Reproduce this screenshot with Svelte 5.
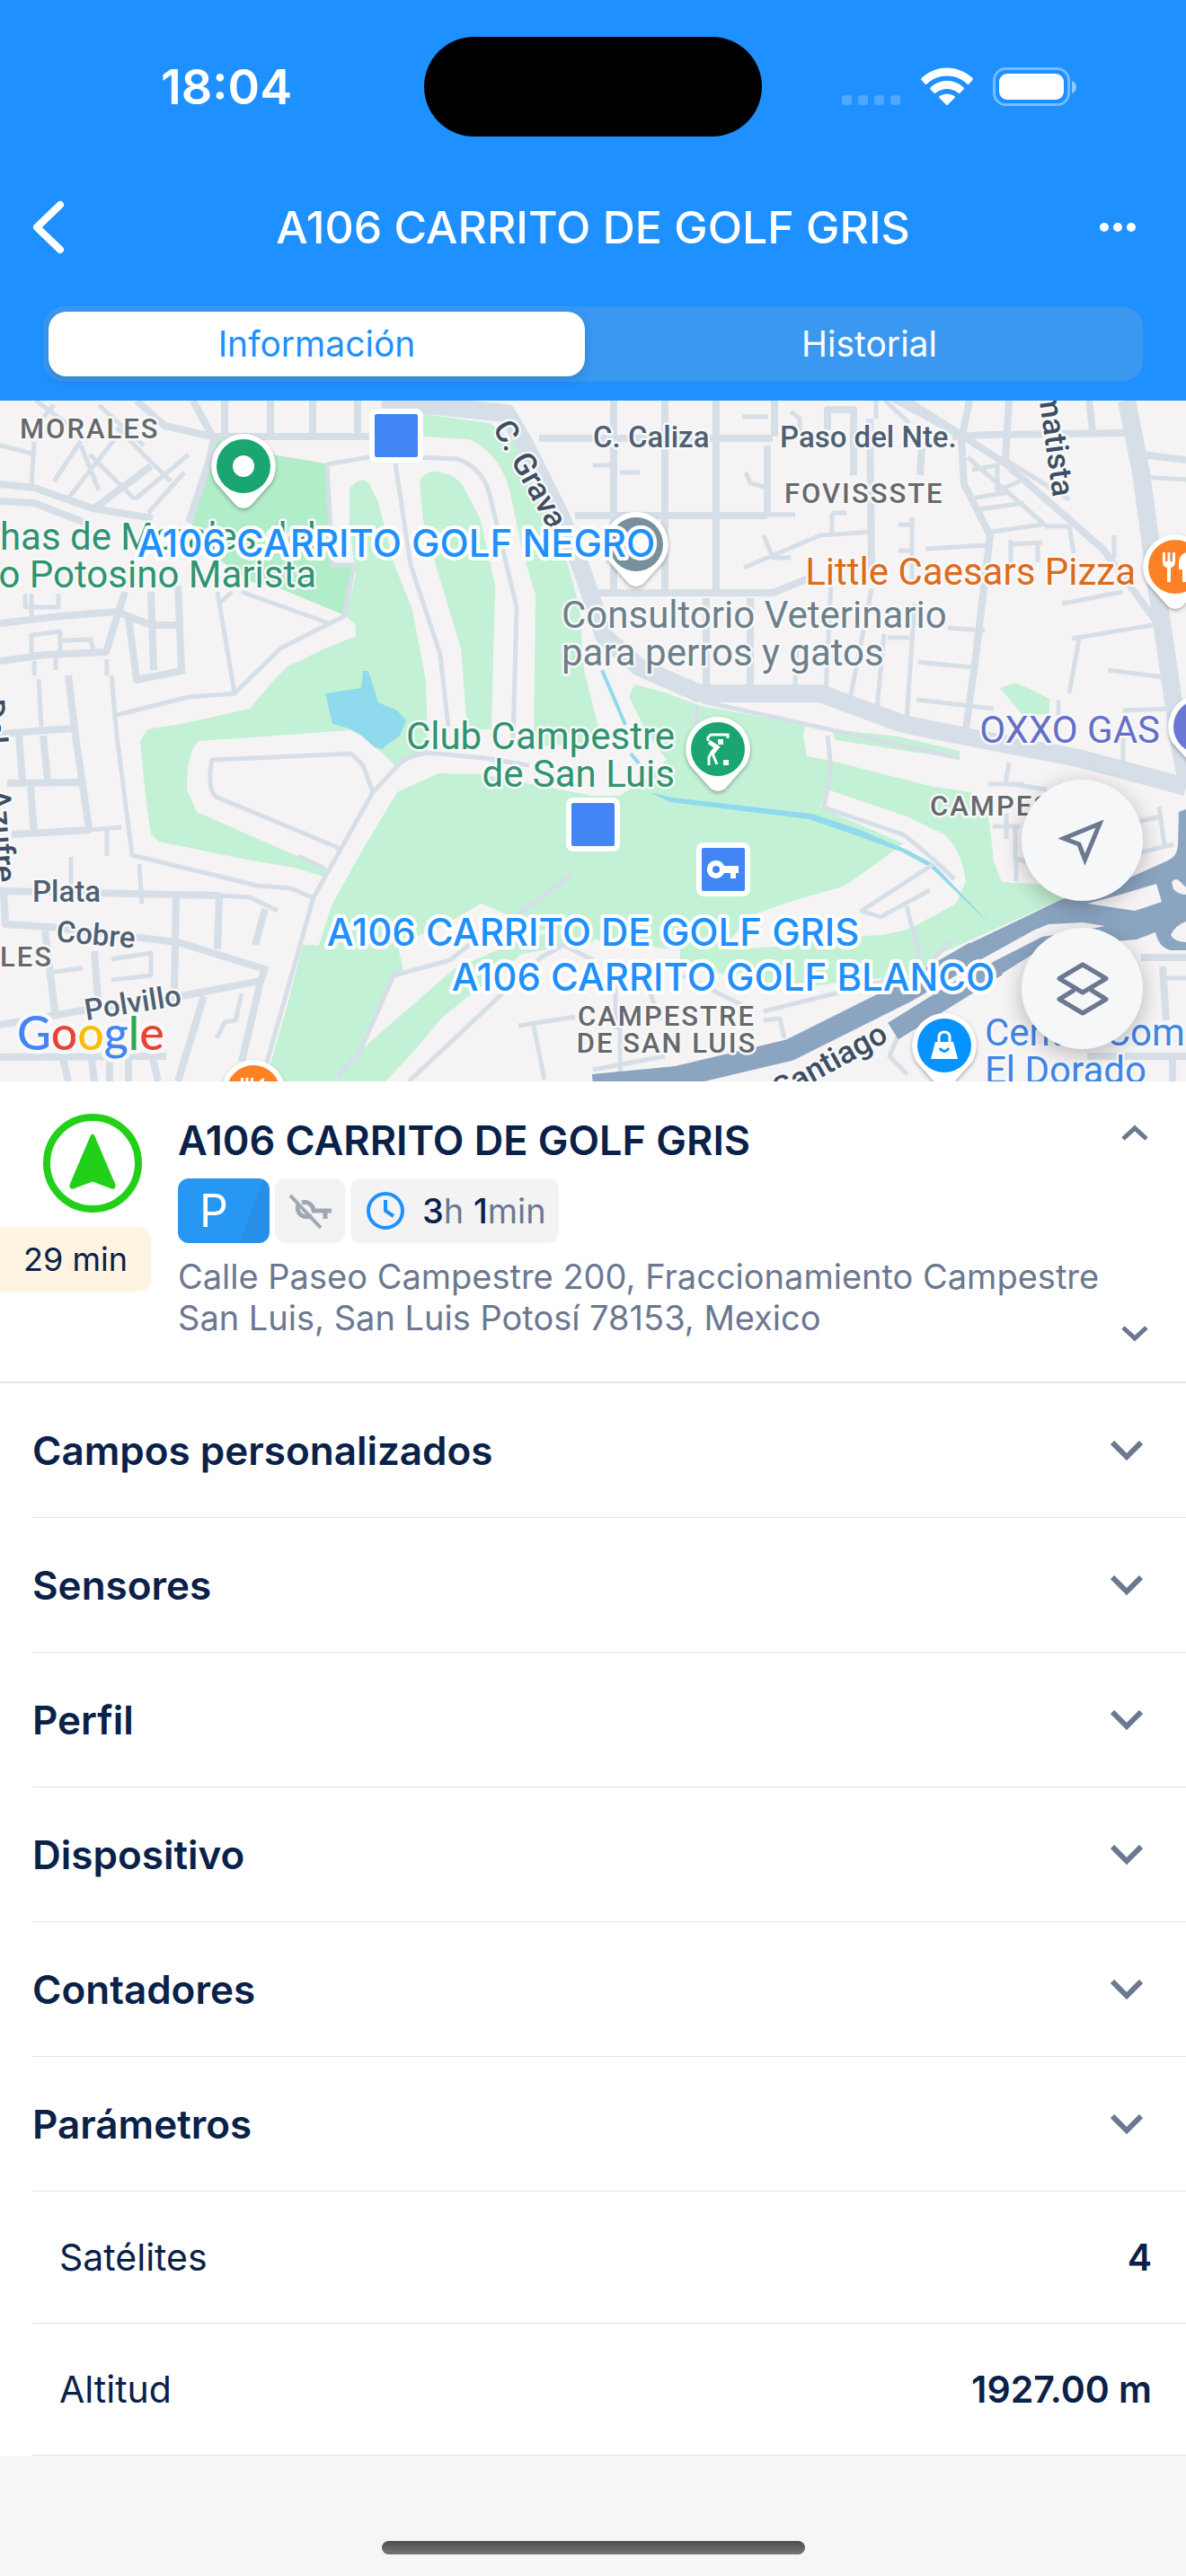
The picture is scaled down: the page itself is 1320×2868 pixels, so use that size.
<script>
  const vehicle = "A106 CARRITO DE GOLF GRIS"

  let tab = $state("info")
  const tabs = [
    { id: "info", label: "Información" },
    { id: "history", label: "Historial" },
  ]

  const sections = [
    "Campos personalizados",
    "Sensores",
    "Perfil",
    "Dispositivo",
    "Contadores",
    "Parámetros",
  ]

  const params = [
    { name: "Satélites", value: "4" },
    { name: "Altitud", value: "1927.00 m" },
  ]

  // Map geometry, in the 1320x758 space of the map's viewBox
  const parks = [
    "M415 8L480 16L545 25L572 46L592 90L620 140L645 230L650 300L670 380L594 385L596 216L581 166L568 103Q558 60 522 43L471 40L430 30Z",
    "M389 98Q400 84 410 91L421 113L438 180L459 233L474 313L476 390L455 396L440 408L434 400L405 375L390 367L221 379Q208 390 208 433L219 458L328 506L364 520L360 530L328 520L269 510L177 491L168 483L162 440L156 380L164 366L202 360L278 343L303 313L320 296L362 276L396 262V250L385 240L396 193L394 180L389 140Z",
    "M467 90Q470 80 484 79Q508 82 516 96L535 133L551 206L547 366H520L513 276L484 180L471 133Z",
    "M706 316L740 325L780 340L836 350L896 362L894 373L898 396L921 400L1039 430L1081 436L1100 460L1106 513L1115 536L1178 540L1186 553L1035 621L1022 640L955 645L883 655L820 640L780 635L757 622L757 600L660 592L600 590L561 571L535 560L497 583L450 602L444 610L353 612L370 560L400 506L442 436L488 415L535 416L623 433L660 440L690 440L720 420L742 400L720 370L700 330Z",
    "M337 606L444 610L450 633L434 643L413 693L398 726L371 758H295L318 680Z",
    "M404 721L505 633L589 596L660 586L757 600L760 622L660 603L581 616L493 686L460 725L429 758H371Z",
    "M925 366L1000 374L1068 390V399L930 378Z",
    "M1113 320L1130 314L1148 322L1168 332V348L1140 352L1128 338Z",
  ]

  const clearings = [
    "M921 433L1009 463L1051 483Q1070 500 1075 535L1064 560L1022 583Q988 600 929 595L887 606L824 611L807 606L837 573L879 558L938 541Q950 535 1005 493L913 453Z",
    "M444 612L497 583L535 560L561 571L589 586L560 600L520 622L450 640Z",
    "M660 600L757 612L757 640L660 640Z",
  ]

  const bigRoads = [
    "M425 0L564 14L585 50L623 126L650 195L672 262L710 296L778 326H913L1005 360L1085 376L1200 398L1320 430",
    "M1254 0L1270 80L1287 206L1313 383L1320 420",
  ]

  const roads = [
    "M0 93L38 97L103 120L170 131",
    "M0 112L38 114L100 138",
    "M210 136L232 70L238 43L215 0",
    "M152 0L183 28L236 40H420",
    "M250 0V40M301 0V40M348 0V40M398 0V40",
    "M105 120L168 73",
    "M0 248L67 240L130 235L168 250H198",
    "M0 290L50 283L118 280L139 213",
    "M143 240L152 311L206 300",
    "M168 213L171 300M198 206L202 300",
    "M76 306L84 373L99 476",
    "M21 373L25 423M48 373L53 423M8 426L93 425M34 430L38 480M13 483L101 478",
    "M0 371L80 365",
    "M0 546L244 551M196 551L194 660M244 551L242 611M295 566L284 606",
    "M4 546L6 583L55 586L198 603L295 633L290 646L202 663L97 678L0 695",
    "M290 646L269 736M227 663L198 758M105 613L109 666M50 590L61 680",
    "M0 731L185 730M70 732L76 758M102 732L105 758M122 732V758M143 732V758M170 732L176 758",
    "M683 0V213M740 0V213M797 0V213M854 50V127M862 0V40",
    "M600 42H860M1060 40L1100 38L1254 36",
    "M640 128H854M660 214H860L900 198",
    "M921 33V10H950V83M968 20L970 190M1026 53L1024 83",
    "M1010 0L1119 70L1228 166L1290 250",
    "M980 -10L1072 40",
    "M1079 0L1070 43L1073 93L1102 150L1085 293L1075 366",
    "M1212 0L1216 33M1123 0L1119 66",
    "M1270 60L1320 66",
    "M786 220V320M835 220V320",
    "M1270 620H1320",
    "M1294 630L1298 690M1210 730H1320M1305 730V758",
  ]

  const lanes = [
    "M38 46L35 93",
    "M242 213L261 326L312 276L383 240L394 183H370L364 71L421 61L509 65Q540 75 547 113L575 230L571 376",
    "M261 326L210 330L130 350",
    "M269 213L366 248",
    "M245 225L258 213",
    "M440 70L457 183L490 283L499 363",
    "M124 306L130 373L147 506L286 540L324 543L347 553",
    "M291 758L349 553L415 436L446 403Q465 390 488 393L539 398L589 406",
    "M415 436L404 406L391 393L236 400Q230 430 240 441L377 498",
    "M332 507L360 520",
    "M375 753L400 726L438 640L501 623L526 603L580 570L636 528",
    "M455 758L602 620L627 606L660 623",
    "M577 696L640 686M594 696L606 756",
    "M43 310L46 363M62 300V285M38 306V290M119 306V288",
    "M35 261L67 257V282L35 283ZM70 267L101 266L104 277",
    "M244 551L278 553L309 568",
    "M124 622L168 615V640L124 645M60 636L92 632",
    "M135 475L101 478M119 477V507M155 516L158 560M79 508V560",
    "M269 660L262 690L250 692L241 710M262 690L265 683",
    "M921 373L925 410L917 453L1005 483Q1040 510 1062 533",
    "M1039 516L959 568L980 575L1035 545",
    "M1009 563L1024 620",
    "M775 340V380M782 335L1068 398",
    "M1123 403L1119 426L1165 433M1100 427H1140",
    "M1105 474H1135M1120 460V488M1130 474V510L1150 515M1131 510V535M1262 470L1292 463M1290 452L1296 495M1262 505L1306 494",
    "M887 270L885 320M925 203L919 326M970 210L946 333M984 260L976 343M1018 226L1009 356",
    "M1022 291L1081 297M1020 333L1106 343M1182 226L1249 213M1193 265L1283 250M1201 265L1190 326M1233 300L1296 308M1055 253L1096 256M988 264H1018",
    "M1250 345L1300 343M1178 333V350",
    "M1030 165L1098 161M828 186L913 150L972 146M850 150L860 175L880 175",
    "M1077 63L1165 140L1190 140M1119 66L1190 110M1104 146L1160 138M1125 155V180M1155 160V180M1125 160L1160 158",
    "M854 127H885M926 125H942M926 125V150M1015 130V200M1000 138H1018M1000 167H1015",
    "M826 18H855M880 12L890 20V40M975 0V20M985 0L1012 25",
    "M1082 77L1110 72V100L1135 90M1085 108L1125 102M1090 121L1140 114",
    "M830 80L835 92L855 97",
    "M660 72H680M690 80H712",
    "M1272 85L1320 88M1240 150V175M1190 140L1195 170",
    "M685 650V700M720 650L735 690M760 640L830 675M850 680L1010 640M850 690L868 688L873 710M690 690V758M660 745L740 730",
    "M1000 706L990 730L1010 750M1020 640L1060 600",
    "M1250 373V405M1294 643H1320",
    "M60 90L90 45M75 110L130 40M90 50L110 100M100 60L150 110M130 30L190 90M150 110L210 60M165 125L205 80M110 5L160 50M60 5L30 40M0 50L40 60M40 0L80 30",
    "M28 215V230H65V215M35 240V215",
  ]

  const interchangeHoles = [
    "M1070 634L1103 616L1150 590L1167 583L1205 581L1230 585L1205 590L1160 597L1105 625L1070 646Z",
    "M1210 560L1247 550L1287 538L1293 558L1263 568Z",
    "M1304 536Q1309 530 1314 536L1320 542V550Q1312 550 1306 544Z",
    "M1303 595Q1308 584 1320 580V603Q1306 602 1303 595Z",
  ]

  const pins = [
    { x: 271, y: 73, color: "#1aa571", icon: "dot" },
    { x: 708, y: 160, color: "#78909c", icon: "dot" },
    { x: 1308, y: 185, color: "#ff8126", icon: "food" },
    { x: 799, y: 388, color: "#1aa571", icon: "golf" },
    { x: 1336, y: 363, color: "#6b78d3", icon: "" },
    { x: 1051, y: 718, color: "#0793ff", icon: "shop" },
    { x: 282, y: 770, color: "#ff8126", icon: "food" },
  ]

  const markers = [
    { x: 441, y: 39, labelY: 174, name: "A106 CARRITO GOLF NEGRO", key: false },
    { x: 660, y: 472, labelY: 607, name: vehicle, key: false },
    { x: 805, y: 522, labelY: 657, name: "A106 CARRITO GOLF BLANCO", key: true },
  ]
</script>

<div class="app">
  <header>
    <div class="status">
      <time>18:04</time>
      <div class="island"></div>
      <svg width="262" height="44" viewBox="0 0 262 44" fill="#fff" aria-hidden="true">
        <g fill-opacity="0.22">
          <rect x="0" y="31" width="11" height="11" rx="3" />
          <rect x="18" y="31" width="11" height="11" rx="3" />
          <rect x="36" y="31" width="11" height="11" rx="3" />
          <rect x="54" y="31" width="11" height="11" rx="3" />
        </g>
        <path d="M117 0.500C128 0.500 138 5 145.500 12Q146.500 13 145.500 14L141.500 18.500Q140.500 19.500 139.500 18.500C133 12.500 125.500 9.500 117 9.500S101 12.500 94.500 18.500Q93.500 19.500 92.500 18.500L88.500 14Q87.500 13 88.500 12C96 5 106 0.500 117 0.500Z" />
        <path d="M117 15C124 15 130.500 17.500 135.500 22.500Q136.500 23.500 135.500 24.500L131.500 28.500Q130.500 29.500 129.500 28.500C126 25.500 121.500 24 117 24S108 25.500 104.500 28.500Q103.500 29.500 102.500 28.500L98.500 24.500Q97.500 23.500 98.500 22.500C103.500 17.500 110 15 117 15Z" />
        <path d="M117 29.500Q122 29.500 125.500 32Q126.500 33 125.500 34L118 41.500Q117 42.500 116 41.500L108.500 34Q107.500 33 108.500 32Q112 29.500 117 29.500Z" />
        <rect x="169.500" y="1.500" width="83" height="40" rx="13" fill="none" stroke="#fff" stroke-opacity="0.4" stroke-width="3" />
        <rect x="175" y="7" width="72" height="29" rx="9" />
        <path d="M256 15Q261 17 261 22T256 29Z" fill-opacity="0.5" />
      </svg>
    </div>

    <nav>
      <button class="icon-btn" aria-label="Atrás">
        <svg width="35" height="60" viewBox="0 0 35 60" fill="none" stroke="#fff" stroke-width="8" stroke-linecap="round" stroke-linejoin="round">
          <path d="M31 5L5 30L31 55" />
        </svg>
      </button>
      <h1>{vehicle}</h1>
      <button class="icon-btn more" aria-label="Más">
        <svg width="40" height="10" viewBox="0 0 40 10" fill="#fff">
          <circle cx="5" cy="5" r="5" />
          <circle cx="20" cy="5" r="5" />
          <circle cx="35" cy="5" r="5" />
        </svg>
      </button>
    </nav>

    <div class="tabs" role="tablist">
      {#each tabs as t}
        <button
          role="tab"
          aria-selected={tab === t.id}
          class:active={tab === t.id}
          onclick={() => (tab = t.id)}>{t.label}</button
        >
      {/each}
    </div>
  </header>

  <section class="map">
    <svg class="canvas" viewBox="0 0 1320 758" preserveAspectRatio="xMidYMid slice" role="img" aria-label="Mapa">
      <rect width="1320" height="758" fill="#f5f3f4" />

      {#each parks as d}
        <path {d} fill="#c3f1d5" />
      {/each}
      <path d="M242 43L309 61L362 70L366 133L370 183L394 185L381 238L316 211L274 200L210 150L229 86Z" fill="#b0edc8" />
      {#each clearings as d}
        <path {d} fill="#f5f3f4" />
      {/each}

      <path d="M362 326L402 320L404 301H410L421 336L442 345L452 356L445 373L425 388L417 386L400 371L388 365L370 360Z" fill="#90daee" />
      <path d="M723 436L748 442L904 460L955 477L1009 500L1039 516L1102 583L1036 520L1005 503L950 483L900 466L746 447Z" fill="#90daee" />
      <path d="M670 300L696 361M702 393L711 404" fill="none" stroke="#90daee" stroke-width="4" />

      <g class="roads">
        {#each lanes as d}
          <path {d} stroke-width="5" />
        {/each}
        {#each roads as d}
          <path {d} stroke-width="8" />
        {/each}
        {#each bigRoads as d}
          <path {d} stroke-width="20" />
        {/each}
        <path class="highway" d="M660 762L753 753L879 723L1009 658L1085 614" stroke-width="24" />
        <path class="highway" d="M994 702L1110 630" stroke-width="22" />
      </g>
      <path
        d="M1078 605L1147 572L1180 556L1240 535L1260 530L1300 512Q1310 508 1311 495L1312 458L1320 455V612H1304Q1290 610 1286 592L1265 600L1240 602L1200 602L1150 616L1107 643L1078 650Z"
        fill="#8ba5c1"
      />
      {#each interchangeHoles as d}
        <path {d} fill="#f5f3f4" />
      {/each}

      {#each pins as pin}
        <g transform="translate({pin.x} {pin.y})">
          <path class="drop" d="M0 -36A36 36 0 0 1 31 18L8 44Q0 50 -8 44L-31 18A36 36 0 0 1 0 -36Z" />
          <circle r="30" fill={pin.color} />
          {#if pin.icon === "dot"}
            <circle r="12" fill="#fff" />
          {:else if pin.icon === "food"}
            <path d="M-14 -16V-6Q-14 0 -9 1V17H-5V1Q0 0 0 -6V-16H-3V-6H-5.500V-16H-8.500V-6H-11V-16ZM12 -16Q3 -13 4 -2V3H8V17H12Z" fill="#fff" />
          {:else if pin.icon === "golf"}
            <g fill="none" stroke="#fff" stroke-width="3">
              <path d="M-11 -9V-13L-8 -16H11V-12" />
              <path d="M-10 -8L-1 -2L-7 5" stroke-width="5" />
              <path d="M-7 4L-10 9V18M-6 5L-1 17" />
            </g>
            <rect x="0" y="-11" width="6" height="6" fill="#fff" />
            <rect x="6" y="12" width="6" height="6" fill="#fff" />
          {:else if pin.icon === "shop"}
            <path d="M-10 -4H10L15 15H-15Z" fill="#fff" />
            <path d="M-6 -4V-9Q-6 -15 0 -15T6 -9V-4" fill="none" stroke="#fff" stroke-width="3" />
            <path d="M-5 3Q0 10 5 3" fill="none" stroke={pin.color} stroke-width="3" />
          {/if}
        </g>
      {/each}

      <g class="area">
        <text x="22" y="42">MORALES</text>
        <text x="873" y="114">FOVISSSTE</text>
        <text x="1035" y="462">CAMPESTRE</text>
        <text x="0" y="630">LES</text>
        <text x="742" y="696" text-anchor="middle">CAMPESTRE</text>
        <text x="742" y="726" text-anchor="middle">DE SAN LUIS</text>
      </g>

      <g class="street">
        <text x="660" y="52">C. Caliza</text>
        <text x="868" y="52">Paso del Nte.</text>
        <text x="36" y="558">Plata</text>
        <text transform="translate(62 602) rotate(5)">Cobre</text>
        <text transform="translate(96 690) rotate(-9)">Polvillo</text>
        <text class="dark" transform="translate(548 30) rotate(61)">C. Grava</text>
        <text class="dark" transform="translate(1172 108) rotate(82)" text-anchor="end">Amatista</text>
        <text class="dark" transform="translate(-20 333) rotate(86)">Del</text>
        <text class="dark" transform="translate(-6 537) rotate(86)" text-anchor="end">Azufre</text>
        <text class="dark" transform="translate(990 712) rotate(-29)" text-anchor="end">Santiago</text>
      </g>

      <g class="place">
        <g class="green">
          <text x="352" y="166" text-anchor="end">has de Morales del</text>
          <text x="352" y="208" text-anchor="end">o Potosino Marista</text>
          <text x="751" y="388" text-anchor="end">Club Campestre</text>
          <text x="751" y="430" text-anchor="end">de San Luis</text>
        </g>
        <g class="slate">
          <text x="625" y="253">Consultorio Veterinario</text>
          <text x="625" y="295">para perros y gatos</text>
        </g>
        <text x="1264" y="205" text-anchor="end" class="orange">Little Caesars Pizza</text>
        <text x="1291" y="381" text-anchor="end" class="violet">OXXO GAS</text>
        <g class="blue">
          <text x="1096" y="718">Centro Com</text>
          <text x="1096" y="760">El Dorado</text>
        </g>
      </g>

      {#each markers as m}
        <g transform="translate({m.x} {m.y})">
          <rect x="-30" y="-30" width="60" height="60" rx="8" fill="#fff" />
          <rect x="-24" y="-24" width="48" height="48" rx="2" fill="#4285f4" />
          {#if m.key}
            <path d="M-8 -10A10 10 0 1 0 1 4H8V10H14V4H17V-4H1A10 10 0 0 0 -8 -10ZM-8 -4A4 4 0 1 1 -8 4A4 4 0 1 1 -8 -4Z" fill="#fff" fill-rule="evenodd" />
          {/if}
        </g>
      {/each}
      {#each markers as m}
        <text class="vehicle" x={m.x} y={m.labelY} text-anchor="middle">{m.name}</text>
      {/each}

      <text class="google" x="19" y="723"
        ><tspan fill="#4285f4">G</tspan><tspan fill="#ea4335">o</tspan><tspan fill="#fbbc04">o</tspan><tspan
          fill="#4285f4">g</tspan
        ><tspan fill="#34a853">l</tspan><tspan fill="#ea4335">e</tspan></text
      >
    </svg>

    <div class="controls">
      <button aria-label="Centrar">
        <svg width="60" height="60" viewBox="0 0 60 60" fill="none" stroke="#6b7890" stroke-width="5">
          <path d="M49 11L9 27.500L26 34L32.500 51Z" />
        </svg>
      </button>
      <button aria-label="Capas">
        <svg width="60" height="60" viewBox="0 0 60 60" fill="none" stroke="#6b7890" stroke-width="5" stroke-linejoin="round">
          <path d="M30 3L56 18.500L30 34L4 18.500Z" />
          <path d="M21 31L4 41.500L30 57L56 41.500L39 31" />
        </svg>
      </button>
    </div>
  </section>

  <section class="summary">
    <div class="state">
      <svg width="110" height="110" viewBox="0 0 110 110" aria-hidden="true">
        <circle cx="55" cy="55" r="51" fill="none" stroke="#22d01a" stroke-width="8" />
        <path d="M52.500 25Q55 20 57.500 25L80.500 79Q81 84.500 76 83.500L55 75.500L34 83.500Q29 84.500 29.500 79Z" fill="#22d01a" />
      </svg>
      <span class="ago">29 min</span>
    </div>

    <div class="details">
      <h2>{vehicle}</h2>
      <div class="chips">
        <span class="chip parking">P</span>
        <span class="chip ignition">
          <svg width="48" height="48" viewBox="0 0 48 48" fill="none" stroke="#a0a7b4" stroke-width="5" aria-hidden="true">
            <path d="M11 17A10 10 0 0 0 26 29M15 15A10 10 0 0 1 28 24M26 24H48M41 24V33" />
            <path d="M2 7L36 43" stroke-width="4" />
          </svg>
        </span>
        <span class="chip duration">
          <svg width="42" height="42" viewBox="0 0 42 42" fill="none" stroke="#1e90ff" stroke-width="4" aria-hidden="true">
            <circle cx="21" cy="21" r="19" />
            <path d="M21 9V21L30 27" />
          </svg>
          <span><b>3</b>h <b>1</b>min</span>
        </span>
      </div>
      <p>Calle Paseo Campestre 200, Fraccionamiento Campestre San Luis, San Luis Potosí 78153, Mexico</p>
    </div>

    <div class="switcher">
      <button class="icon-btn" aria-label="Anterior">
        <svg width="30" height="18" viewBox="0 0 30 18" fill="none" stroke="#6b7890" stroke-width="5">
          <path d="M2 16L15 4L28 16" />
        </svg>
      </button>
      <button class="icon-btn" aria-label="Siguiente">
        <svg width="30" height="18" viewBox="0 0 30 18" fill="none" stroke="#6b7890" stroke-width="5">
          <path d="M2 2L15 14L28 2" />
        </svg>
      </button>
    </div>
  </section>

  <section class="list">
    {#each sections as title}
      <button class="row">
        {title}
        <svg width="36" height="22" viewBox="0 0 36 22" fill="none" stroke="#6b7890" stroke-width="6" aria-hidden="true">
          <path d="M2 2L18 18L34 2" />
        </svg>
      </button>
    {/each}
    <dl>
      {#each params as p}
        <div class="param">
          <dt>{p.name}</dt>
          <dd>{p.value}</dd>
        </div>
      {/each}
    </dl>
  </section>

  <footer><div class="home"></div></footer>
</div>

<style>
  :global(body) {
    background: #f5f6f8;
  }

  .app {
    display: flex;
    flex-direction: column;
    min-height: 100vh;
    font-family: Inter, "Noto Sans", sans-serif;
    color: #0a2149;
    background: #f5f6f8;
  }

  button {
    border: 0;
    background: none;
    font: inherit;
    color: inherit;
    cursor: pointer;
  }

  svg {
    display: block;
    flex: none;
  }

  header {
    padding: 41px 0 21px;
    background: #1e90ff;
    color: #fff;
  }

  .status {
    display: grid;
    grid-template-columns: 1fr auto 1fr;
    align-items: center;
    justify-items: center;
    padding: 0 32px;
  }

  .status time {
    font-size: 54px;
    line-height: 64px;
    font-weight: 600;
  }

  .island {
    width: 376px;
    height: 111px;
    border-radius: 56px;
    background: #000;
  }

  nav {
    display: grid;
    grid-template-columns: 1fr auto 1fr;
    align-items: center;
    padding: 61px 36px 48px;
  }

  .icon-btn {
    padding: 0;
    justify-self: start;
  }

  .more {
    justify-self: end;
    padding: 20px;
  }

  h1 {
    margin: 0;
    font-size: 50px;
    line-height: 80px;
    font-weight: 500;
  }

  .tabs {
    display: grid;
    grid-template-columns: 1fr 1fr;
    gap: 18px;
    margin: 0 48px;
    padding: 6px;
    border-radius: 24px;
    background: #3a98f0;
  }

  .tabs button {
    padding: 0;
    border-radius: 20px;
    font-size: 39px;
    line-height: 72px;
    color: #fff;
  }

  .tabs .active {
    background: #fff;
    color: #1e90ff;
    box-shadow: 0 4px 12px rgba(0, 0, 0, 0.14);
  }

  .map {
    position: relative;
    overflow: hidden;
  }

  .canvas {
    width: 100%;
    height: auto;
  }

  .roads path {
    fill: none;
    stroke: #d6dfe7;
    stroke-linejoin: round;
  }

  .roads .highway {
    stroke: #8ba5c1;
  }

  .drop {
    fill: #fff;
    filter: drop-shadow(0 2px 2px rgba(0, 0, 0, 0.3));
  }

  .canvas text {
    font-family: Roboto, "Noto Sans", sans-serif;
    stroke: #f8f8f8;
    stroke-width: 5px;
    stroke-linejoin: round;
    paint-order: stroke;
  }

  .canvas .area text {
    font-size: 31px;
    font-weight: 500;
    letter-spacing: 2px;
    fill: #66696c;
  }

  .canvas .street text {
    font-size: 33px;
    font-weight: 500;
    fill: #4f6073;
  }

  .canvas .street .dark {
    font-size: 35px;
    fill: #3d4e62;
  }

  .canvas .place text {
    font-size: 42px;
  }

  .green {
    fill: #2f9471;
  }

  .slate {
    fill: #6c808c;
  }

  .orange {
    fill: #dc6b1c;
  }

  .violet {
    fill: #6470c8;
  }

  .blue {
    fill: #3f86e6;
  }

  .canvas .vehicle {
    font-family: Inter, "Noto Sans", sans-serif;
    font-size: 42px;
    font-weight: 500;
    fill: #1e90ff;
    stroke: #fff;
    stroke-width: 8px;
  }

  .canvas .google {
    font-family: Lato, sans-serif;
    font-size: 52px;
    font-weight: 500;
    stroke-width: 9px;
  }

  .controls {
    position: absolute;
    right: 48px;
    bottom: 36px;
    display: flex;
    flex-direction: column;
    gap: 30px;
  }

  .controls button {
    display: grid;
    place-items: center;
    width: 135px;
    height: 135px;
    padding: 0;
    border-radius: 50%;
    background: #f5f7f9;
    box-shadow: 0 6px 24px rgba(0, 0, 0, 0.25);
  }

  .summary {
    display: grid;
    grid-template-columns: 168px 1fr auto;
    padding-right: 42px;
    border-bottom: 2px solid #e3e4e9;
    background: #fff;
  }

  .state {
    display: flex;
    flex-direction: column;
    gap: 16px;
    padding-top: 36px;
  }

  .state svg {
    margin-left: 48px;
  }

  .ago {
    padding-left: 26px;
    border-radius: 0 14px 14px 0;
    background: #fff3e2;
    font-size: 36px;
    line-height: 72px;
  }

  .details {
    display: flex;
    flex-direction: column;
    gap: 14px;
    padding: 38px 0 48px 30px;
  }

  h2 {
    margin: 0;
    font-size: 45px;
    line-height: 56px;
    font-weight: 600;
  }

  .chips {
    display: flex;
    gap: 6px;
  }

  .chip {
    display: flex;
    align-items: center;
    height: 72px;
    border-radius: 12px;
    background: #f3f3f4;
  }

  .parking {
    width: 102px;
    box-sizing: border-box;
    padding-left: 24px;
    background: linear-gradient(110deg, #2697f3 74%, #2690e8 74%);
    color: #fff;
    font-size: 50px;
  }

  .ignition {
    padding: 0 15px;
  }

  .duration {
    gap: 20px;
    padding: 0 14px 0 18px;
    font-size: 38px;
    color: #6b7890;
  }

  .duration b {
    font-weight: 500;
    color: #0a2149;
  }

  p {
    margin: 0;
    font-size: 38px;
    line-height: 46px;
    color: #6b7890;
  }

  .switcher {
    display: flex;
    flex-direction: column;
    justify-content: space-between;
    padding: 48px 0 44px;
  }

  .list {
    padding-left: 36px;
    background: #fff;
  }

  .row,
  .param {
    display: flex;
    align-items: center;
    justify-content: space-between;
    box-sizing: border-box;
    width: 100%;
    border-bottom: 1px solid #e3e4e9;
  }

  .row {
    height: 150px;
    padding: 0 48px 0 0;
    font-size: 44px;
    font-weight: 600;
  }

  .param {
    height: 147px;
    padding: 0 38px 0 30px;
    font-size: 41px;
  }

  dl,
  dd {
    margin: 0;
  }

  dd {
    font-weight: 600;
  }

  footer {
    flex: 1;
    display: flex;
    align-items: flex-end;
    justify-content: center;
    padding-bottom: 24px;
  }

  .home {
    width: 471px;
    height: 15px;
    border-radius: 8px;
    background: linear-gradient(#4c4e4d, #777);
  }
</style>
